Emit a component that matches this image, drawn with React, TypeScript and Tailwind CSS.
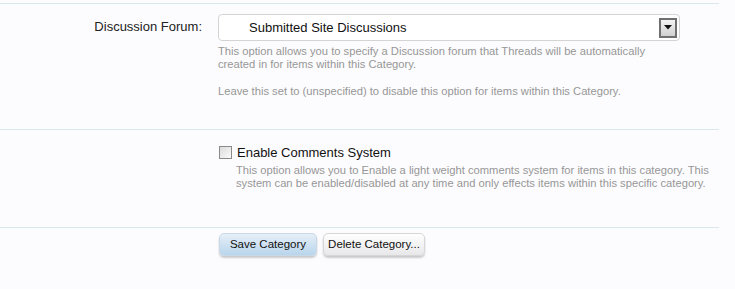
import React from "react";

const font = { fontFamily: '"Liberation Sans", Arial, sans-serif' };

function Row({ label, children, className = "" }: { label?: string; children: React.ReactNode; className?: string }) {
  return (
    <div className={`flex border-t border-[#d9e8ec] ${className}`}>
      <div className="w-[218px] shrink-0 pr-[16px] text-right text-[13px] text-[#222]">
        {label && <div className="pt-[13px]">{label}</div>}
      </div>
      <div className="flex-1">{children}</div>
    </div>
  );
}

export default function App() {
  return (
    <div className="h-[289px] w-[735px] bg-[#fcfcfe] pt-[3px]" style={font}>
      <div className="w-[719px]">
        <Row label="Discussion Forum:" className="h-[126px]">
          <div className="mt-[10px] flex h-[27px] w-[462px] items-center rounded-[4px] border border-[#d4d4d4] bg-white pl-[30px] pr-[2px] text-[13px] text-[#111]">
            <span className="flex-1">Submitted Site Discussions</span>
            <span className="flex h-[20px] w-[18px] items-center justify-center border-2 border-[#707070] bg-gradient-to-b from-[#f4f4f4] to-[#d0d0d0]">
              <svg width="8" height="5" viewBox="0 0 8 5">
                <path d="M0 0h8L4 4.5z" fill="#111" />
              </svg>
            </span>
          </div>
          <div className="mt-[4px] w-[445px] text-[11.2px] leading-[13px] text-[#979797]">
            This option allows you to specify a Discussion forum that Threads will be automatically created in for items within this Category.
          </div>
          <div className="mt-[14px] text-[11.2px] leading-[13px] text-[#979797]">
            Leave this set to (unspecified) to disable this option for items within this Category.
          </div>
        </Row>
        <Row className="h-[98px]">
          <label className="mt-[13px] flex items-center gap-[5px] text-[13px] text-[#111]">
            <span className="ml-[1px] h-[13px] w-[13px] border border-[#8a8a8a] bg-gradient-to-br from-[#dcdcdc] to-[#fafafa]" />
            Enable Comments System
          </label>
          <div className="ml-[18px] mt-[1px] w-[486px] text-[11.2px] leading-[13px] text-[#979797]">
            This option allows you to Enable a light weight comments system for items in this category. This system can be enabled/disabled at any time and only effects items within this specific category.
          </div>
        </Row>
        <Row className="h-[62px]">
          <div className="mt-[5px] flex gap-[6px] text-[11.5px] text-[#111]">
            <button className="ml-[1px] h-[23px] w-[98px] rounded-[5px] border border-[#c8d8e6] bg-gradient-to-b from-[#e6eff8] to-[#b9d5ec] shadow-[0_2px_2px_rgba(0,0,0,0.2)]">
              Save Category
            </button>
            <button className="h-[23px] w-[102px] rounded-[5px] border border-[#d6d6d6] bg-gradient-to-b from-[#ffffff] to-[#e8e8ea] shadow-[0_2px_2px_rgba(0,0,0,0.2)]">
              Delete Category...
            </button>
          </div>
        </Row>
      </div>
    </div>
  );
}
